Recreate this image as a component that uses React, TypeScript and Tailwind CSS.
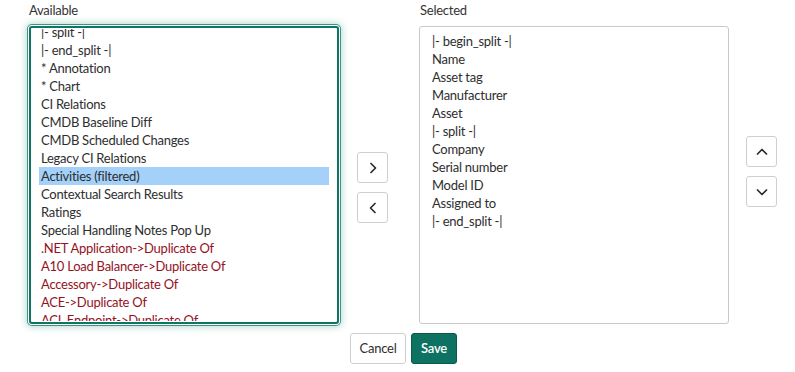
import { useEffect, useRef } from 'react'

type Item = { label: string; red?: boolean; selected?: boolean }

const available: Item[] = [
  { label: '|- split -|' },
  { label: '|- end_split -|' },
  { label: '* Annotation' },
  { label: '* Chart' },
  { label: 'CI Relations' },
  { label: 'CMDB Baseline Diff' },
  { label: 'CMDB Scheduled Changes' },
  { label: 'Legacy CI Relations' },
  { label: 'Activities (filtered)', selected: true },
  { label: 'Contextual Search Results' },
  { label: 'Ratings' },
  { label: 'Special Handling Notes Pop Up' },
  { label: '.NET Application->Duplicate Of', red: true },
  { label: 'A10 Load Balancer->Duplicate Of', red: true },
  { label: 'Accessory->Duplicate Of', red: true },
  { label: 'ACE->Duplicate Of', red: true },
  { label: 'ACL Endpoint->Duplicate Of', red: true },
]

const selected = [
  '|- begin_split -|',
  'Name',
  'Asset tag',
  'Manufacturer',
  'Asset',
  '|- split -|',
  'Company',
  'Serial number',
  'Model ID',
  'Assigned to',
  '|- end_split -|',
]

function Chevron({ dir }: { dir: 'right' | 'left' | 'up' | 'down' }) {
  const pts = {
    right: '4,1.5 8.5,6 4,10.5',
    left: '8,1.5 3.5,6 8,10.5',
    up: '1.5,8 6,3.5 10.5,8',
    down: '1.5,4 6,8.5 10.5,4',
  }[dir]
  return (
    <svg width="12" height="12" viewBox="0 0 12 12" fill="none">
      <polyline points={pts} stroke="#2b2b2b" strokeWidth="1.7" strokeLinecap="round" strokeLinejoin="round" />
    </svg>
  )
}

function IconButton({ dir }: { dir: 'right' | 'left' | 'up' | 'down' }) {
  return (
    <button className="flex h-[31px] w-[31px] items-center justify-center rounded-[3px] border border-[#cfcfcf] bg-white">
      <Chevron dir={dir} />
    </button>
  )
}

export default function App() {
  const listRef = useRef<HTMLDivElement>(null)

  useEffect(() => {
    if (listRef.current) listRef.current.scrollTop = 6
  }, [])

  return (
    <div className="h-[372px] w-[795px] bg-white font-['Lato',sans-serif] text-[13px] tracking-[-0.25px] text-[#2e2e2e]">
      <div className="flex pt-[2px]">
        <div className="ml-[29px] flex flex-col">
          <div className="h-[24px] leading-[17px] text-[#333]">Available</div>
          <div className="h-[298px] w-[310px] rounded-[3px] border-2 border-[#0e7564] p-px shadow-[0_0_0_1px_#ffffff,0_0_0_2px_#3d9485,0_0_7px_3px_rgba(90,170,155,0.45)]">
            <div ref={listRef} className="h-full overflow-hidden rounded-[2px] px-[7px]">
              {available.map((it) => (
                <div
                  key={it.label}
                  className={`h-[18px] whitespace-nowrap px-[2px] leading-[18px] ${it.selected ? 'bg-[#a3d1f9]' : ''} ${it.red ? 'text-[#94121e]' : ''}`}
                >
                  {it.label}
                </div>
              ))}
            </div>
          </div>
        </div>

        <div className="ml-[18px] flex flex-col gap-[9px] pt-[150px]">
          <IconButton dir="right" />
          <IconButton dir="left" />
        </div>

        <div className="ml-[31px] flex flex-col">
          <div className="h-[24px] pl-px leading-[17px] text-[#333]">Selected</div>
          <div className="h-[298px] w-[310px] rounded-[3px] border border-[#c9c9c9] pl-[12px] pt-[5px]">
            {selected.map((s, i) => (
              <div key={i} className="h-[18px] whitespace-nowrap leading-[18px]">
                {s}
              </div>
            ))}
          </div>
        </div>

        <div className="ml-[17px] flex flex-col gap-[9px] pt-[134px]">
          <IconButton dir="up" />
          <IconButton dir="down" />
        </div>
      </div>

      <div className="mt-[9px] flex justify-center gap-[5px] pl-[12px]">
        <button className="h-[31px] w-[56px] rounded-[3px] border border-[#cfcfcf] bg-white text-[#2e2e2e]">Cancel</button>
        <button className="h-[31px] w-[46px] rounded-[3px] border border-[#0a5a4d] bg-[#0d7262] font-semibold text-white">Save</button>
      </div>
    </div>
  )
}
